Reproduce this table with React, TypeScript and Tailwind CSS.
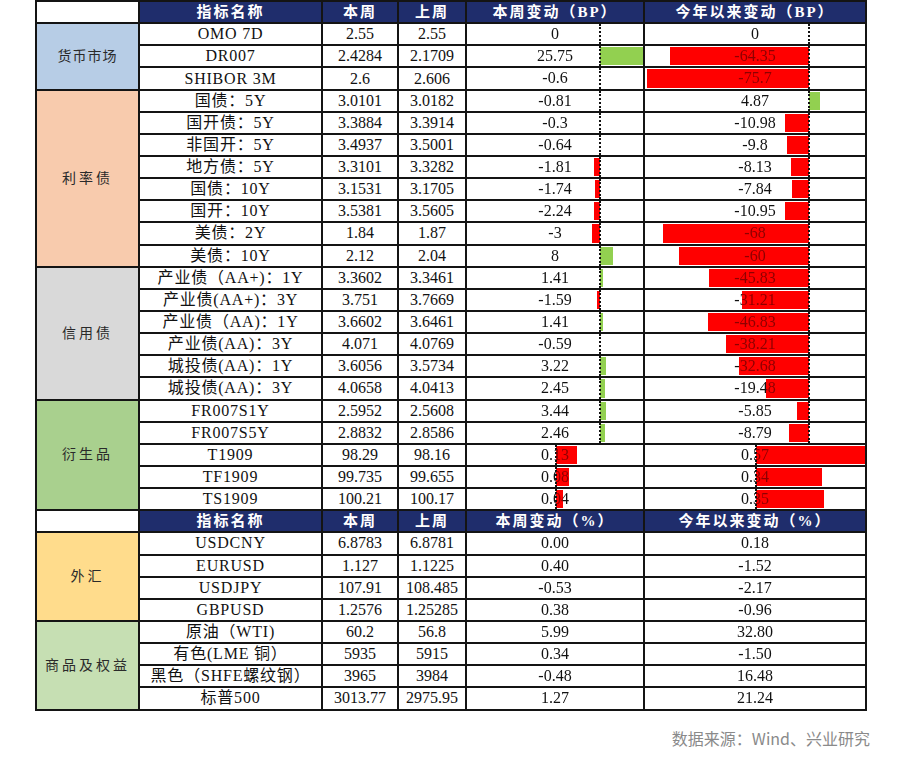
type Bar = { l: number; r: number; c: "r" | "g" };
type Row = {
  name: string;
  cur: string;
  prev: string;
  wk: string;
  ytd: string;
  wkAxis?: number;
  ytdAxis?: number;
  wkBar?: Bar;
  ytdBar?: Bar;
};

const RED = "#ff0000";
const GREEN = "#92d050";

const money: Row[] = [
  { name: "OMO 7D", cur: "2.55", prev: "2.55", wk: "0", ytd: "0" },
  { name: "DR007", cur: "2.4284", prev: "2.1709", wk: "25.75", ytd: "-64.35", wkBar: { l: 133, r: 176, c: "g" }, ytdBar: { l: 25, r: 164, c: "r" } },
  { name: "SHIBOR 3M", cur: "2.6", prev: "2.606", wk: "-0.6", ytd: "-75.7", ytdBar: { l: 2, r: 164, c: "r" } },
];

const rates: Row[] = [
  { name: "国债：5Y", cur: "3.0101", prev: "3.0182", wk: "-0.81", ytd: "4.87", ytdBar: { l: 164, r: 175, c: "g" } },
  { name: "国开债：5Y", cur: "3.3884", prev: "3.3914", wk: "-0.3", ytd: "-10.98", ytdBar: { l: 140, r: 164, c: "r" } },
  { name: "非国开：5Y", cur: "3.4937", prev: "3.5001", wk: "-0.64", ytd: "-9.8", ytdBar: { l: 142, r: 164, c: "r" } },
  { name: "地方债：5Y", cur: "3.3101", prev: "3.3282", wk: "-1.81", ytd: "-8.13", wkBar: { l: 127, r: 133, c: "r" }, ytdBar: { l: 146, r: 164, c: "r" } },
  { name: "国债：10Y", cur: "3.1531", prev: "3.1705", wk: "-1.74", ytd: "-7.84", wkBar: { l: 128, r: 133, c: "r" }, ytdBar: { l: 147, r: 164, c: "r" } },
  { name: "国开：10Y", cur: "3.5381", prev: "3.5605", wk: "-2.24", ytd: "-10.95", wkBar: { l: 127, r: 133, c: "r" }, ytdBar: { l: 140, r: 164, c: "r" } },
  { name: "美债：2Y", cur: "1.84", prev: "1.87", wk: "-3", ytd: "-68", wkBar: { l: 125, r: 133, c: "r" }, ytdBar: { l: 18, r: 164, c: "r" } },
  { name: "美债：10Y", cur: "2.12", prev: "2.04", wk: "8", ytd: "-60", wkBar: { l: 133, r: 146, c: "g" }, ytdBar: { l: 34, r: 164, c: "r" } },
];

const credit: Row[] = [
  { name: "产业债（AA+)：1Y", cur: "3.3602", prev: "3.3461", wk: "1.41", ytd: "-45.83", wkBar: { l: 133, r: 135.5, c: "g" }, ytdBar: { l: 64, r: 164, c: "r" } },
  { name: "产业债(AA+)：3Y", cur: "3.751", prev: "3.7669", wk: "-1.59", ytd: "-31.21", wkBar: { l: 130, r: 133, c: "r" }, ytdBar: { l: 97, r: 164, c: "r" } },
  { name: "产业债（AA)：1Y", cur: "3.6602", prev: "3.6461", wk: "1.41", ytd: "-46.83", wkBar: { l: 133, r: 135.5, c: "g" }, ytdBar: { l: 63, r: 164, c: "r" } },
  { name: "产业债(AA)：3Y", cur: "4.071", prev: "4.0769", wk: "-0.59", ytd: "-38.21", ytdBar: { l: 81, r: 164, c: "r" } },
  { name: "城投债(AA)：1Y", cur: "3.6056", prev: "3.5734", wk: "3.22", ytd: "-32.68", wkBar: { l: 133, r: 139, c: "g" }, ytdBar: { l: 94, r: 164, c: "r" } },
  { name: "城投债(AA)：3Y", cur: "4.0658", prev: "4.0413", wk: "2.45", ytd: "-19.48", wkBar: { l: 133, r: 138, c: "g" }, ytdBar: { l: 121, r: 164, c: "r" } },
];

const deriv: Row[] = [
  { name: "FR007S1Y", cur: "2.5952", prev: "2.5608", wk: "3.44", ytd: "-5.85", wkBar: { l: 133, r: 138.5, c: "g" }, ytdBar: { l: 152, r: 164, c: "r" } },
  { name: "FR007S5Y", cur: "2.8832", prev: "2.8586", wk: "2.46", ytd: "-8.79", wkBar: { l: 133, r: 138, c: "g" }, ytdBar: { l: 144, r: 164, c: "r" } },
  { name: "T1909", cur: "98.29", prev: "98.16", wk: "0.13", ytd: "0.57", wkAxis: 89, ytdAxis: 111, wkBar: { l: 89, r: 110, c: "r" }, ytdBar: { l: 111, r: 220, c: "r" } },
  { name: "TF1909", cur: "99.735", prev: "99.655", wk: "0.08", ytd: "0.34", wkAxis: 89, ytdAxis: 111, wkBar: { l: 89, r: 102, c: "r" }, ytdBar: { l: 111, r: 177, c: "r" } },
  { name: "TS1909", cur: "100.21", prev: "100.17", wk: "0.04", ytd: "0.35", wkAxis: 89, ytdAxis: 111, wkBar: { l: 89, r: 96, c: "r" }, ytdBar: { l: 111, r: 179, c: "r" } },
];

const fx: Row[] = [
  { name: "USDCNY", cur: "6.8783", prev: "6.8781", wk: "0.00", ytd: "0.18" },
  { name: "EURUSD", cur: "1.127", prev: "1.1225", wk: "0.40", ytd: "-1.52" },
  { name: "USDJPY", cur: "107.91", prev: "108.485", wk: "-0.53", ytd: "-2.17" },
  { name: "GBPUSD", cur: "1.2576", prev: "1.25285", wk: "0.38", ytd: "-0.96" },
];

const comm: Row[] = [
  { name: "原油（WTI)", cur: "60.2", prev: "56.8", wk: "5.99", ytd: "32.80" },
  { name: "有色(LME 铜）", cur: "5935", prev: "5915", wk: "0.34", ytd: "-1.50" },
  { name: "黑色（SHFE螺纹钢）", cur: "3965", prev: "3984", wk: "-0.48", ytd: "16.48" },
  { name: "标普500", cur: "3013.77", prev: "2975.95", wk: "1.27", ytd: "21.24" },
];

const font = "font-['Liberation_Serif','Noto_Sans_CJK_SC',serif]";

function Header({ unit }: { unit: string }) {
  const h = "bg-[#1f2d6c] text-white font-bold text-[15px] tracking-[2px] flex items-center justify-center whitespace-nowrap";
  return (
    <>
      <div className="bg-white" />
      <div className={h}>指标名称</div>
      <div className={h}>本周</div>
      <div className={h}>上周</div>
      <div className={h}>本周变动（{unit}）</div>
      <div className={h}>今年以来变动（{unit}）</div>
    </>
  );
}

function BarCell({ value, bar, axis }: { value: string; bar?: Bar; axis?: number }) {
  const ink = bar && bar.c === "r" ? "#8e0000" : "#111";
  return (
    <div className="relative bg-white">
      {bar && (
        <div
          className="absolute top-[1px] bottom-[1px]"
          style={{ left: bar.l, width: bar.r - bar.l, background: bar.c === "r" ? RED : GREEN }}
        />
      )}
      {axis !== undefined && (
        <div className="absolute top-0 bottom-0 w-0 border-l-2 border-dotted border-[#111]" style={{ left: axis - 1 }} />
      )}
      <span
        className="relative block w-full text-center text-[16px] leading-[20px] bg-clip-text text-transparent"
        style={{
          backgroundImage: bar
            ? `linear-gradient(to right, #111 ${bar.l}px, ${ink} ${bar.l}px, ${ink} ${bar.r}px, #111 ${bar.r}px)`
            : "linear-gradient(#111, #111)",
        }}
      >
        {value}
      </span>
    </div>
  );
}

function Rows({ rows, bp }: { rows: Row[]; bp?: boolean }) {
  const cell = "bg-white flex items-center justify-center text-[16px] text-[#111] whitespace-nowrap";
  return (
    <>
      {rows.map((r) => (
        <div key={r.name} className="contents">
          <div className={cell + " text-[15px] tracking-[0.8px]"}>{r.name}</div>
          <div className={cell}>{r.cur}</div>
          <div className={cell}>{r.prev}</div>
          <BarCell value={r.wk} bar={r.wkBar} axis={bp ? r.wkAxis ?? 133 : undefined} />
          <BarCell value={r.ytd} bar={r.ytdBar} axis={bp ? r.ytdAxis ?? 164 : undefined} />
        </div>
      ))}
    </>
  );
}

function Category({ label, span, color, track }: { label: string; span: string; color: string; track: string }) {
  return (
    <div className={`${span} ${color} ${track} flex items-center justify-center text-[14px] text-[#2a2a2a]`}>
      {label}
    </div>
  );
}

export default function App() {
  return (
    <div className={`w-[900px] h-[762px] bg-white pl-[35px] ${font}`}>
      <div className="w-[832px] grid grid-cols-[101px_181px_74px_66px_176px_220px] auto-rows-[20.15px] gap-[2px] p-[2px] bg-[#141414]">
        <Header unit="BP" />
        <Category label="货币市场" span="row-span-3" color="bg-[#b7cde6]" track="tracking-[1px]" />
        <Rows rows={money} bp />
        <Category label="利率债" span="row-span-8" color="bg-[#f8cbad]" track="tracking-[3px]" />
        <Rows rows={rates} bp />
        <Category label="信用债" span="row-span-6" color="bg-[#d9d9d9]" track="tracking-[3px]" />
        <Rows rows={credit} bp />
        <Category label="衍生品" span="row-span-5" color="bg-[#a9d08e]" track="tracking-[3px]" />
        <Rows rows={deriv} bp />
        <Header unit="%" />
        <Category label="外汇" span="row-span-4" color="bg-[#ffdc8c]" track="tracking-[3px]" />
        <Rows rows={fx} />
        <Category label="商品及权益" span="row-span-4" color="bg-[#c6dfb3]" track="tracking-[3px]" />
        <Rows rows={comm} />
      </div>
      <div className="flex justify-end pr-[30px] mt-[17px]">
        <span className="font-['Noto_Sans_CJK_SC',sans-serif] text-[16px] leading-[20px] text-[#8a8a8a]">
          数据来源：Wind、兴业研究
        </span>
      </div>
    </div>
  );
}
